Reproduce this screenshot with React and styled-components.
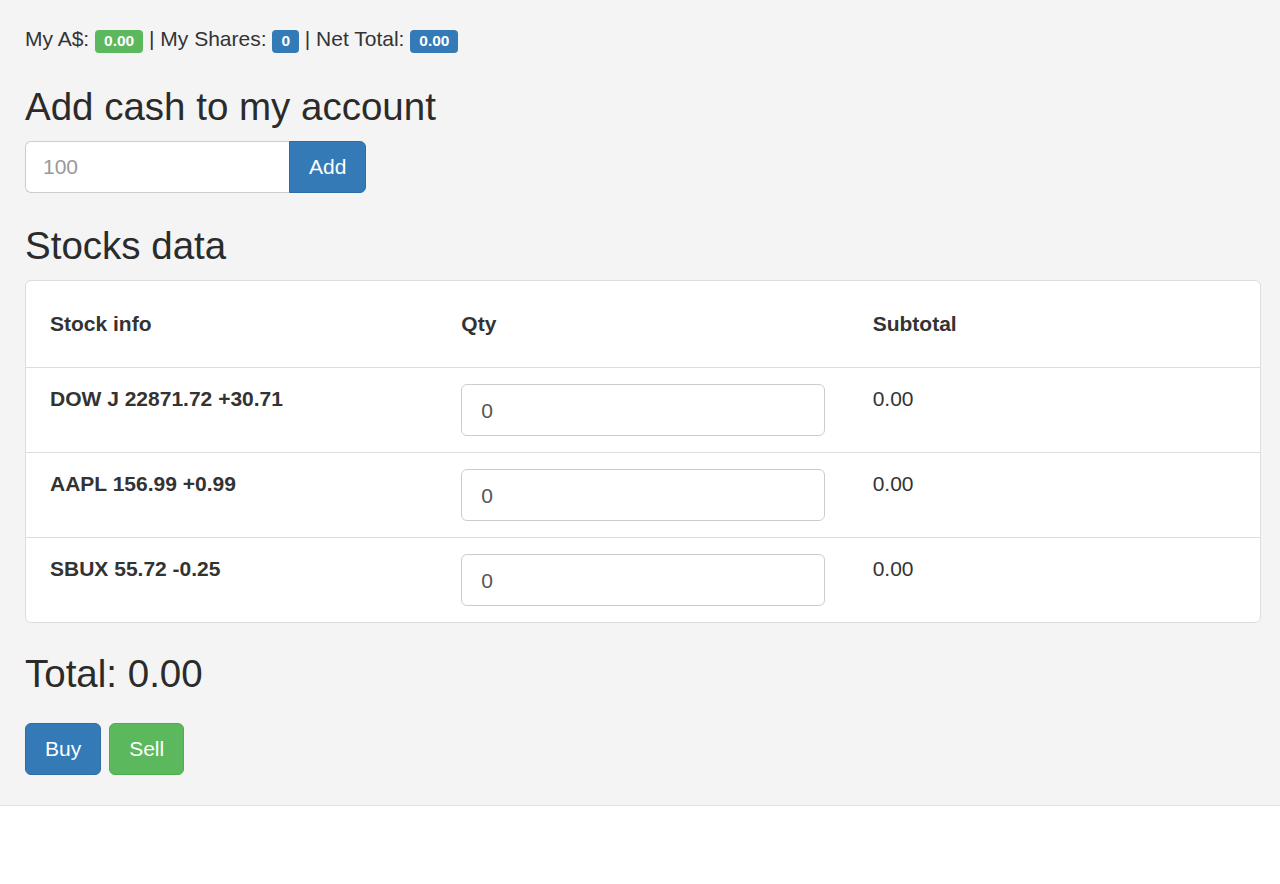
import React from "react";
import styled, { createGlobalStyle } from "styled-components";

const GlobalStyle = createGlobalStyle`
  body {
    margin: 0;
    background: #ffffff;
    font-family: "Liberation Sans", Arial, sans-serif;
    color: #333333;
  }
`;

const Page = styled.div`
  background: #f4f4f4;
  border-bottom: 1px solid #e0e0e0;
  padding: 25px 19px 30px 25px;
  font-size: 21px;
  line-height: 28px;
`;

const Summary = styled.div`
  height: 29px;
`;

const Badge = styled.span`
  display: inline-block;
  padding: 3px 9px 4px;
  font-size: 15.5px;
  font-weight: bold;
  line-height: 1;
  color: #ffffff;
  border-radius: 4px;
  background: ${(p) => (p.$tone === "success" ? "#5cb85c" : "#337ab7")};
`;

const Heading = styled.h2`
  margin: ${(p) => p.$top || 32}px 0 0;
  font-size: 38.5px;
  font-weight: normal;
  line-height: 42px;
  color: #2b2b2b;
`;

const InputGroup = styled.div`
  display: flex;
  width: 344px;
  margin-top: 13px;
`;

const CashInput = styled.input`
  box-sizing: border-box;
  width: 264px;
  height: 52px;
  padding: 0 17px;
  font-family: inherit;
  font-size: 21px;
  color: #555555;
  background: #ffffff;
  border: 1px solid #cccccc;
  border-right: none;
  border-radius: 6px 0 0 6px;
  outline: none;
  &::placeholder {
    color: #999999;
  }
`;

const Button = styled.button`
  box-sizing: border-box;
  height: 52px;
  padding: 0 19px;
  font-family: inherit;
  font-size: 21px;
  color: #ffffff;
  background: ${(p) => (p.$tone === "success" ? "#5cb85c" : "#337ab7")};
  border: 1px solid ${(p) => (p.$tone === "success" ? "#4cae4c" : "#2e6da4")};
  border-radius: ${(p) => (p.$attached ? "0 6px 6px 0" : "6px")};
  cursor: pointer;
`;

const Panel = styled.div`
  margin-top: 13px;
  background: #ffffff;
  border: 1px solid #dddddd;
  border-radius: 6px;
  overflow: hidden;
`;

const Table = styled.table`
  width: 100%;
  border-collapse: collapse;
  table-layout: fixed;
`;

const Th = styled.th`
  height: 86px;
  padding: 0 24px;
  text-align: left;
  font-weight: bold;
  vertical-align: middle;
`;

const Row = styled.tr`
  border-top: 1px solid #dddddd;
`;

const Td = styled.td`
  height: 84px;
  box-sizing: border-box;
  padding: 16px 24px;
  vertical-align: top;
  font-weight: ${(p) => (p.$bold ? "bold" : "normal")};
  line-height: 30px;
`;

const QtyInput = styled.input`
  display: block;
  box-sizing: border-box;
  width: 364px;
  height: 52px;
  padding: 2px 19px 0;
  font-family: inherit;
  font-size: 21px;
  color: #555555;
  background: #ffffff;
  border: 1px solid #cccccc;
  border-radius: 6px;
  outline: none;
`;

const Actions = styled.div`
  display: flex;
  gap: 8px;
  margin-top: 28px;
`;

const stocks = [
  { name: "DOW J", price: "22871.72", change: "+30.71" },
  { name: "AAPL", price: "156.99", change: "+0.99" },
  { name: "SBUX", price: "55.72", change: "-0.25" },
];

export default function App() {
  return (
    <>
      <GlobalStyle />
      <Page>
        <Summary>
          My A$: <Badge $tone="success">0.00</Badge> | My Shares:{" "}
          <Badge>0</Badge> | Net Total: <Badge>0.00</Badge>
        </Summary>

        <Heading>Add cash to my account</Heading>
        <InputGroup>
          <CashInput placeholder="100" />
          <Button $attached>Add</Button>
        </InputGroup>

        <Heading>Stocks data</Heading>
        <Panel>
          <Table>
            <thead>
              <tr>
                <Th>Stock info</Th>
                <Th>Qty</Th>
                <Th>Subtotal</Th>
              </tr>
            </thead>
            <tbody>
              {stocks.map((s) => (
                <Row key={s.name}>
                  <Td $bold>
                    {s.name} {s.price} {s.change}
                  </Td>
                  <Td>
                    <QtyInput defaultValue="0" />
                  </Td>
                  <Td>0.00</Td>
                </Row>
              ))}
            </tbody>
          </Table>
        </Panel>

        <Heading $top={30}>Total: 0.00</Heading>
        <Actions>
          <Button>Buy</Button>
          <Button $tone="success">Sell</Button>
        </Actions>
      </Page>
    </>
  );
}
